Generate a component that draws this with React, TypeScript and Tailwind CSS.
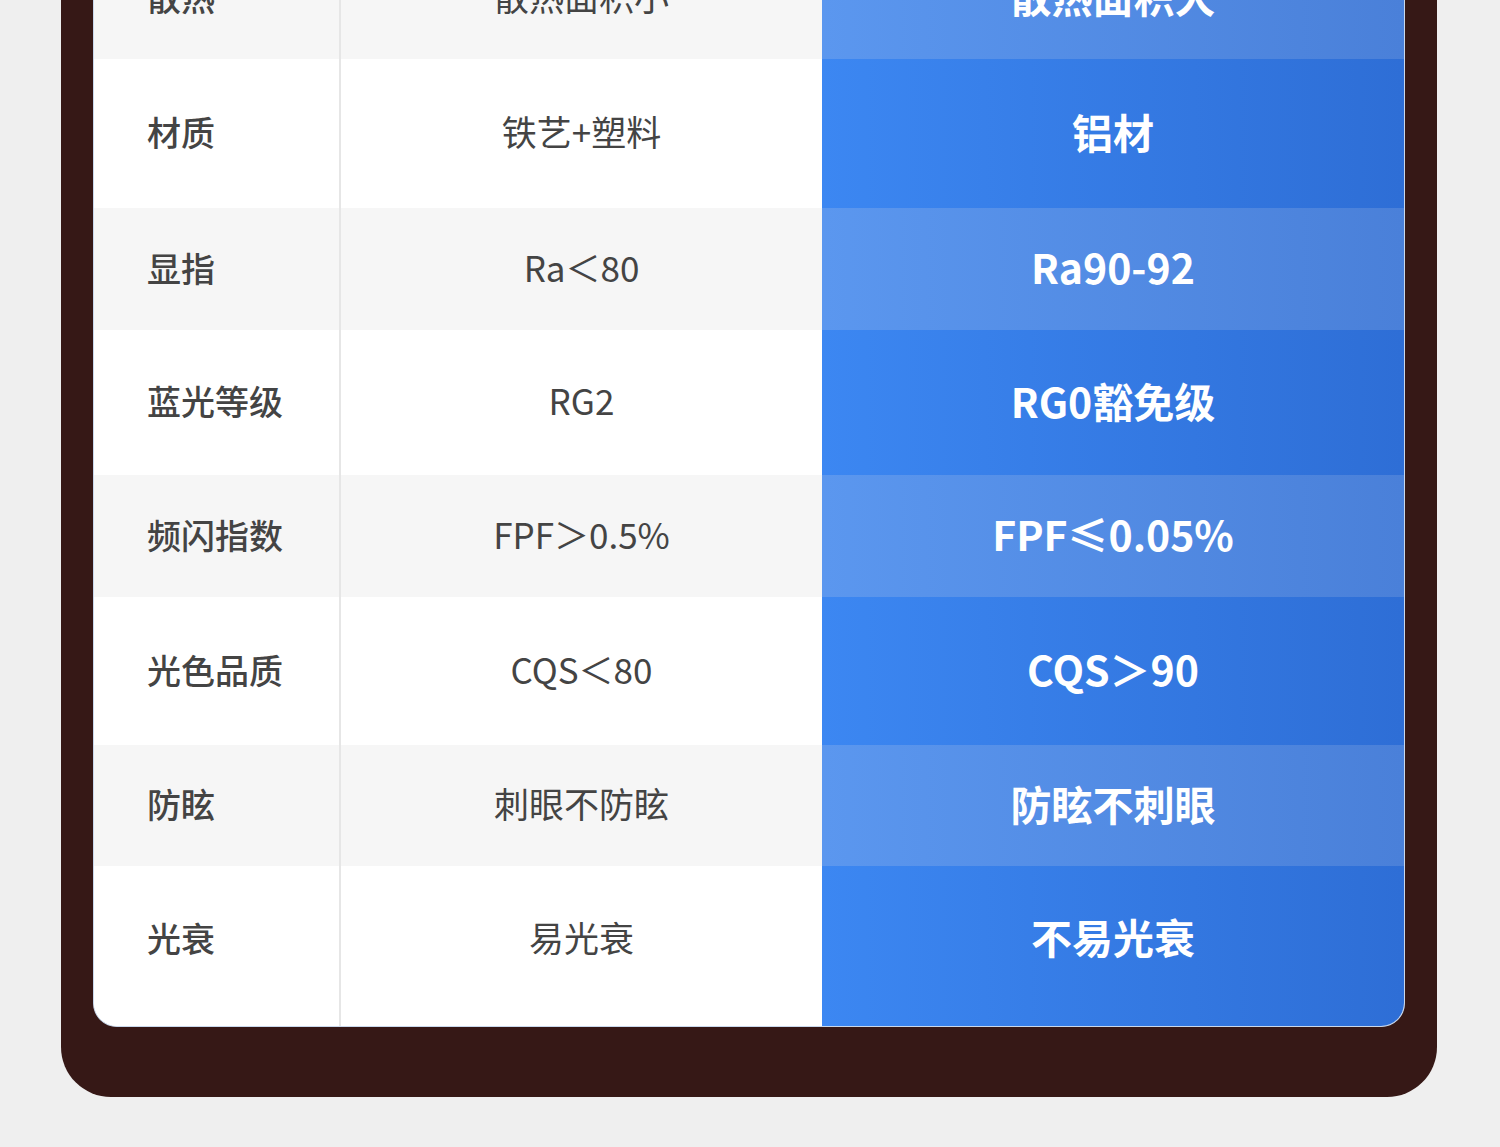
const rows = [
    { label: '散热', normal: '散热面积小', ours: '散热面积大', h: 'h-[122px]', pad: 'pb-[4px]' },
    { label: '材质', normal: '铁艺+塑料', ours: '铝材', h: 'h-[149px]', pad: 'pb-[4px]' },
    { label: '显指', normal: 'Ra＜80', ours: 'Ra90-92', h: 'h-[122px]', pad: 'pb-[4px]' },
    { label: '蓝光等级', normal: 'RG2', ours: 'RG0豁免级', h: 'h-[145px]', pad: 'pb-[4px]' },
    { label: '频闪指数', normal: 'FPF＞0.5%', ours: 'FPF≤0.05%', h: 'h-[122px]', pad: 'pb-[4px]' },
    { label: '光色品质', normal: 'CQS＜80', ours: 'CQS＞90', h: 'h-[148px]', pad: 'pb-[4px]' },
    { label: '防眩', normal: '刺眼不防眩', ours: '防眩不刺眼', h: 'h-[121px]', pad: 'pb-[4px]' },
    { label: '光衰', normal: '易光衰', ours: '不易光衰', h: 'h-[160px]', pad: 'pb-[18px]' },
]

export default function App() {
    return (
        <div
            className="w-[1500px] h-[1147px] overflow-hidden bg-[#efefef]"
            style={{ fontFamily: '"Noto Sans CJK SC", "Noto Sans", sans-serif' }}
        >
            {/* dark frame, its top is scrolled off above the shot */}
            <div className="ml-[61px] mt-[-63px] w-[1376px] bg-[#361816] rounded-b-[50px] px-[32px] pb-[70px]">
                <div className="rounded-b-[24px] overflow-hidden border border-t-0 border-[#c9d8ec] bg-white">
                    {rows.map((r, i) => {
                        const striped = i % 2 === 0
                        const bg = striped ? 'bg-[#f6f6f6]' : 'bg-white'
                        return (
                            <div key={r.label} className={`flex ${r.h} ${bg}`}>
                                <div className={`w-[245px] flex items-center pl-[53px] ${r.pad} text-[34px] font-medium text-[#444]`}>
                                    {r.label}
                                </div>
                                <div className={`w-[483px] flex items-center justify-center ${r.pad} border-l-2 border-[#e6e6e6] text-[35px] text-[#444]`}>
                                    {r.normal}
                                </div>
                                <div
                                    className={`flex-1 flex items-center justify-center ${r.pad} text-[41px] font-bold text-white ${striped ? 'bg-gradient-to-r from-[#5b97ef] to-[#4a80d9]' : 'bg-gradient-to-r from-[#3c87f2] to-[#2e6ed6]'}`}
                                >
                                    {r.ours}
                                </div>
                            </div>
                        )
                    })}
                </div>
            </div>
        </div>
    )
}
